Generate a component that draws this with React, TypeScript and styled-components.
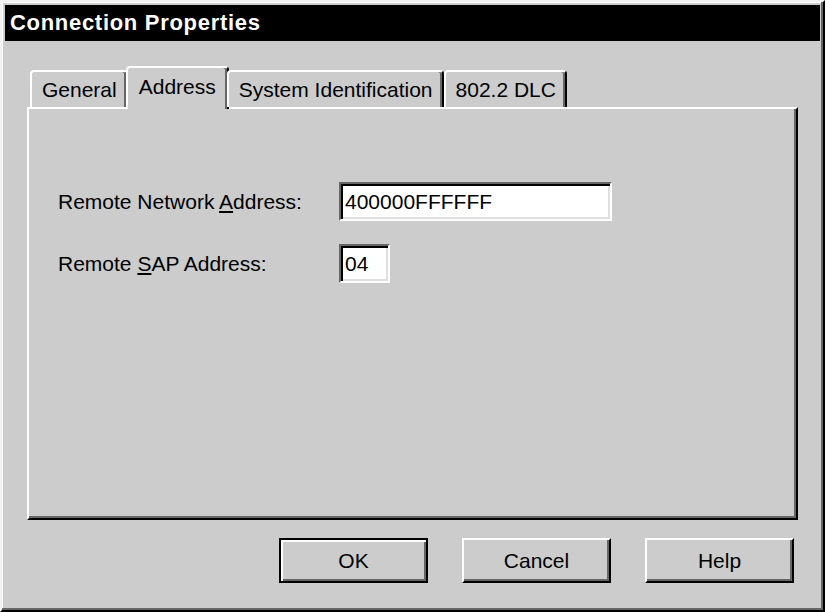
import React from "react";
import styled, { createGlobalStyle } from "styled-components";

const GlobalStyle = createGlobalStyle`
  html, body {
    margin: 0;
    padding: 0;
    background: #cccccc;
  }
  * {
    box-sizing: border-box;
  }
`;

const Window = styled.div`
  width: 825px;
  height: 612px;
  display: flex;
  flex-direction: column;
  background: #cccccc;
  border: 2px solid;
  border-color: #f2f2f2 #000 #000 #f2f2f2;
  box-shadow: inset -2px -2px #666666, inset 1px 1px #ffffff;
  padding: 3px;
  font-family: "Liberation Sans", Arial, sans-serif;
  color: #000;
`;

const TitleBar = styled.div`
  height: 36px;
  background: #000;
  color: #fff;
  display: flex;
  align-items: center;
  padding-left: 5px;
  font-weight: bold;
  font-size: 22px;
  letter-spacing: 0.7px;
`;

const Body = styled.div`
  flex: 1;
  display: flex;
  flex-direction: column;
  padding: 25px 22px 0 22px;
`;

const TabStrip = styled.div`
  height: 41px;
  display: flex;
  align-items: flex-end;
  padding-left: 3px;
  position: relative;
  z-index: 1;
`;

const Tab = styled.div<{ $active?: boolean }>`
  height: ${(p) => (p.$active ? "43px" : "37px")};
  margin: ${(p) => (p.$active ? "0 -2px -2px -2px" : "0")};
  padding: ${(p) => (p.$active ? "0 11px 4px 11px" : "0 9px 0 10px")};
  display: flex;
  align-items: center;
  font-size: 21px;
  background: #cccccc;
  border-style: solid;
  border-width: 2px 2px 0 2px;
  border-color: #fff #000 #000 #fff;
  border-radius: 4px 4px 0 0;
  box-shadow: inset -2px 0 #666666;
  white-space: nowrap;
`;

const Panel = styled.div`
  height: 413px;
  border: 2px solid;
  border-color: #fff #000 #000 #fff;
  box-shadow: inset -2px -2px #666666;
  padding: 73px 0 0 29px;
`;

const Form = styled.div`
  display: grid;
  grid-template-columns: 281px auto;
  row-gap: 23px;
  align-items: center;
  justify-items: start;
`;

const Label = styled.div`
  font-size: 21px;
  white-space: nowrap;
`;

const Field = styled.div<{ $width: number }>`
  width: ${(p) => p.$width}px;
  height: 39px;
  background: #fff;
  border: 2px solid;
  border-color: #666666 #fff #fff #666666;
  box-shadow: inset 2px 2px #000, inset -2px -2px #dfdfdf;
  display: flex;
  align-items: center;
  padding: 0 4px;
  font-size: 21px;
`;

const ButtonRow = styled.div`
  display: flex;
  justify-content: flex-end;
  gap: 34px;
  margin-top: 18px;
  padding-right: 4px;
`;

const Button = styled.div<{ $default?: boolean }>`
  width: 149px;
  height: 45px;
  display: flex;
  align-items: center;
  justify-content: center;
  font-size: 21px;
  background: #cccccc;
  border: 2px solid;
  border-color: ${(p) => (p.$default ? "#000" : "#fff #000 #000 #fff")};
  box-shadow: ${(p) =>
    p.$default
      ? "inset 2px 2px #fff, inset -2px -2px #666666"
      : "inset -2px -2px #666666"};
`;

export default function App() {
  return (
    <>
      <GlobalStyle />
      <Window>
        <TitleBar>Connection Properties</TitleBar>
        <Body>
          <TabStrip>
            <Tab>General</Tab>
            <Tab $active>Address</Tab>
            <Tab>System Identification</Tab>
            <Tab>802.2 DLC</Tab>
          </TabStrip>
          <Panel>
            <Form>
              <Label>
                Remote Network <u>A</u>ddress:
              </Label>
              <Field $width={273}>400000FFFFFF</Field>
              <Label>
                Remote <u>S</u>AP Address:
              </Label>
              <Field $width={51}>04</Field>
            </Form>
          </Panel>
          <ButtonRow>
            <Button $default>OK</Button>
            <Button>Cancel</Button>
            <Button>Help</Button>
          </ButtonRow>
        </Body>
      </Window>
    </>
  );
}
